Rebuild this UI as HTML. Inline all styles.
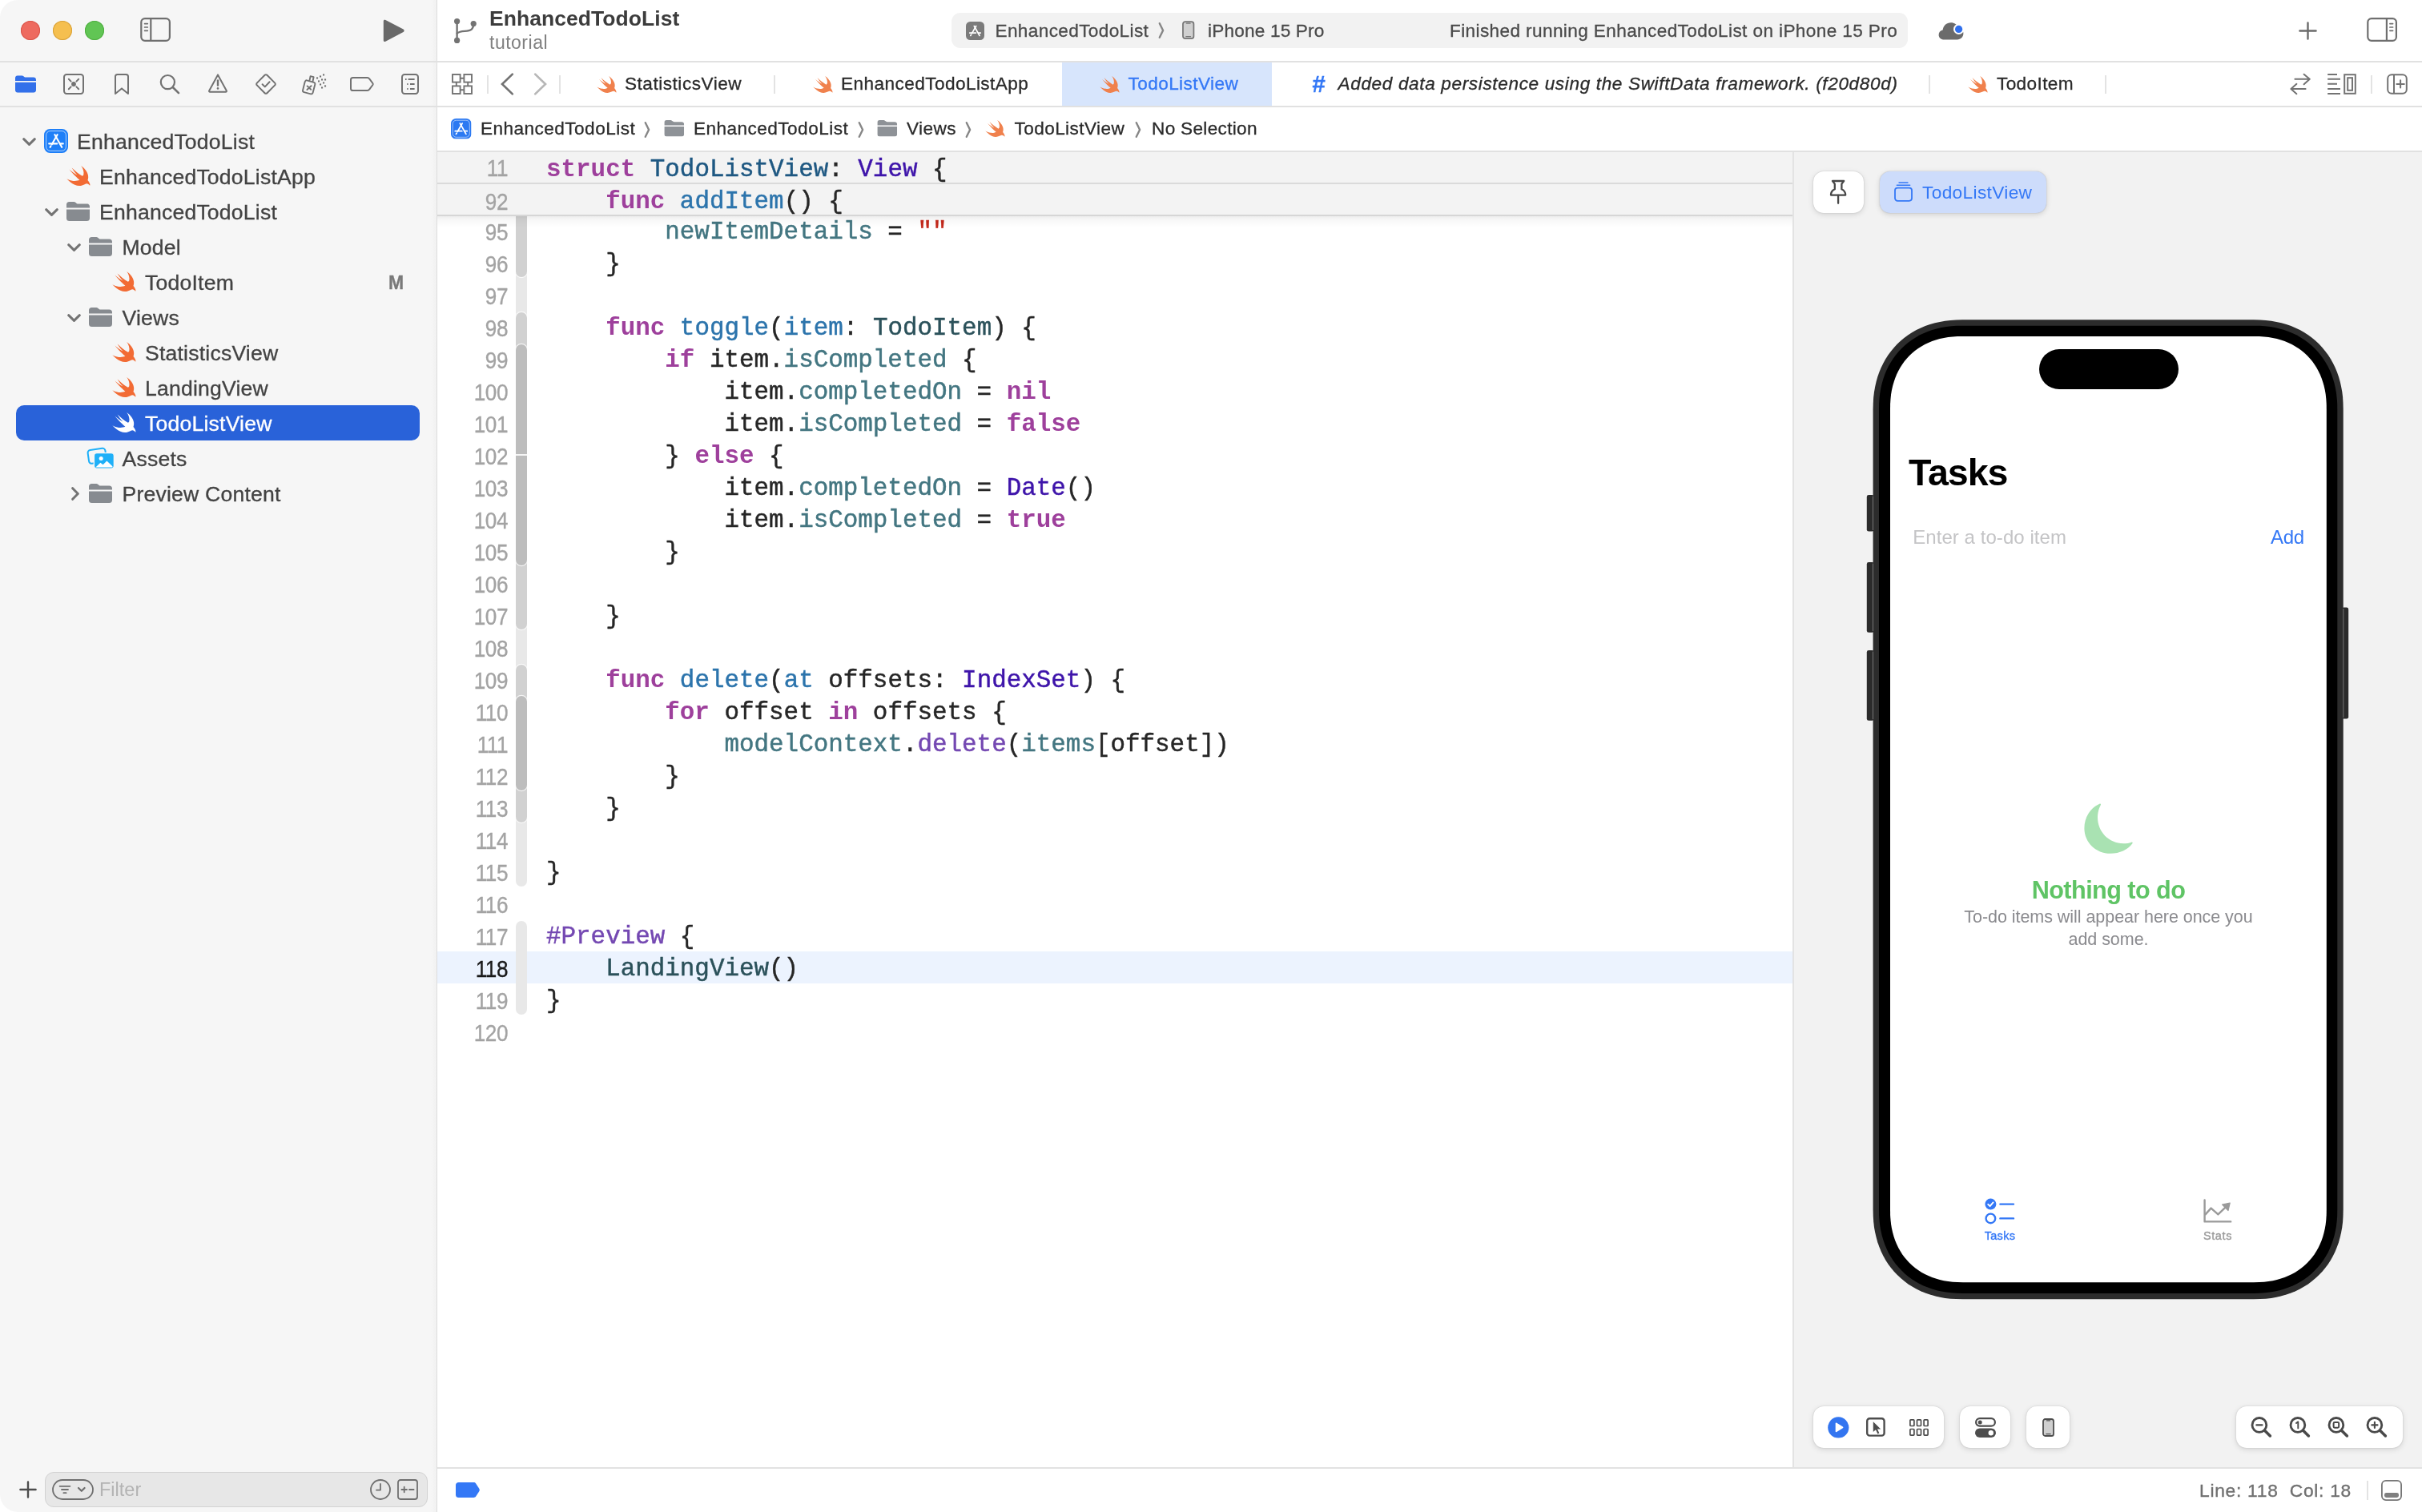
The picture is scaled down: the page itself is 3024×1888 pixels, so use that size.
<!DOCTYPE html>
<html lang="en">
<head>
<meta charset="utf-8">
<title>EnhancedTodoList — TodoListView.swift</title>
<style>
*{box-sizing:border-box;margin:0;padding:0}
html,body{width:3024px;height:1888px;background:#fff}
body{position:relative;font-family:"Liberation Sans",sans-serif;color:#262626;-webkit-font-smoothing:antialiased}
#app{position:absolute;left:0;top:0;width:3024px;height:1888px;overflow:hidden;background:#fff;will-change:transform}
.abs{position:absolute}
.t{position:absolute;white-space:pre;line-height:1}
svg{position:absolute;overflow:visible}
/* regions */
#sidebar{position:absolute;left:0;top:0;width:545px;height:1888px;background:linear-gradient(90deg,#f6f6f6 0,#f6f6f6 538px,#f1f1f1 545px);border-radius:22px 0 0 22px}
#sbline{position:absolute;left:545px;top:0;width:1px;height:1888px;background:#dddddd}
.hline{position:absolute;height:2px;background:#e1e1e1}
.vsep{position:absolute;width:2px;background:#e3e3e3}
/* sidebar tree */
.row{position:absolute;left:0;width:545px;height:44px}
.row .lbl{position:absolute;top:8.5px;font-size:26.6px;line-height:28px;color:#434343;white-space:pre;letter-spacing:.2px;-webkit-text-stroke-width:.3px}
.sel{position:absolute;left:20px;top:506px;width:504px;height:44px;border-radius:10px;background:#2962d9}
/* tabs / crumbs */
.tab{position:absolute;top:91.4px;font-size:22.6px;line-height:28px;color:#2b2b2b;white-space:pre;-webkit-text-stroke-width:.3px}
.crumb{position:absolute;top:147.2px;font-size:22.6px;line-height:28px;color:#2b2b2b;white-space:pre;-webkit-text-stroke-width:.3px}
.chev{position:absolute;top:151px;width:8px;height:22px}
/* editor */
#editor{position:absolute;left:546px;top:190px;width:1692px;height:1642px;background:#fff;overflow:hidden}
.ln{position:absolute;left:0;width:88px;text-align:right;font-size:29px;line-height:40px;height:40px;color:#a3a3a3;letter-spacing:-.5px;transform:scaleX(.9);transform-origin:100% 50%;-webkit-text-stroke-width:.35px}
.cl{position:absolute;left:136px;font-family:"Liberation Mono",monospace;font-size:30.9px;line-height:40px;height:40px;white-space:pre;color:#262626;-webkit-text-stroke-width:.45px}
.k{color:#9e409c;font-weight:bold;-webkit-text-stroke-width:0}
.ty{color:#1e5882}
.fn{color:#2c74ac}
.iv{color:#437681}
.pc{color:#2b515a}
.sc{color:#3e14aa}
.sf{color:#7448b2}
.st{color:#c4291c}
.rib{position:absolute;left:98px;width:14px}
/* preview */
#preview{position:absolute;left:2239px;top:190px;width:785px;height:1642px;background:#f2f2f2}
.card{position:absolute;background:#fff;border-radius:13px;box-shadow:0 0 1.5px rgba(0,0,0,.22),0 2px 7px rgba(0,0,0,.13)}
</style>
</head>
<body>
<div id="app">
<svg width="0" height="0" style="left:-10px;top:-10px">
<defs>
<symbol id="swift" viewBox="0 0 30 25.4">
<path d="M18.25 0.1C21.5 2.2 25.2 6.3 26.6 10.5C27.5 13.3 27.3 16 26.5 17.9C27.8 19.4 29.3 22 29.4 23.6C29.4 24.6 29.2 24.9 28.9 24.6C28.2 23.5 26.6 22.2 24.6 22.4C23.4 22.6 22.6 23.3 21.4 23.8C19.8 24.6 18 25.1 16.1 25.1C12.2 25.1 8.2 23.2 5.6 21C3.5 19.3 1.6 17.5 0.3 16.3C3 17.7 5.5 18.6 8.2 18.9C11.2 19.3 14.2 18.9 16.4 17.6C13.4 15.3 8.5 10.5 3.4 4.4C6.5 7 10.5 10 13.5 11.6C10.8 9 8.5 5.5 6.6 2.5C10.5 6.3 15.5 10.3 19.8 12.8C20.4 12.5 21 12 21.3 11.2C22 8 21 3.8 18.25 0.1Z"/>
</symbol>
<symbol id="folder" viewBox="0 0 29 24">
<path d="M0 3.6C0 1.4 1.3 0 3.5 0H8.6C9.9 0 10.6 .3 11.6 1.1L12.6 1.9C13.2 2.4 13.8 2.6 14.8 2.6H25.4C27.6 2.6 29 3.9 29 6.1V7.6H0ZM0 9.4H29V20.4C29 22.6 27.6 24 25.4 24H3.6C1.4 24 0 22.6 0 20.4Z"/>
</symbol>
<symbol id="chevd" viewBox="0 0 17 10">
<path d="M1.7 1.7L8.5 8.3L15.3 1.7" fill="none" stroke-width="3" stroke-linecap="round" stroke-linejoin="round"/>
</symbol>
<symbol id="chevr" viewBox="0 0 10 17">
<path d="M1.7 1.7L8.3 8.5L1.7 15.3" fill="none" stroke-width="3" stroke-linecap="round" stroke-linejoin="round"/>
</symbol>
<symbol id="appA" viewBox="0 0 30 30">
<rect x="0" y="0" width="30" height="30" rx="7.5"/>
<rect x="2.6" y="2.6" width="24.8" height="24.8" rx="5.2" fill="none" stroke="#fff" stroke-opacity=".65" stroke-width="1"/>
<g stroke="#fff" stroke-width="2.1" stroke-linecap="round" fill="none">
<path d="M6.2 18.4H16.2M20.6 18.4H23.8"/>
<path d="M16.6 7.2L9.6 19.4M8.4 21.4L7.6 22.8"/>
<path d="M13.4 7.2L22.2 22.8"/>
</g>
</symbol>
<symbol id="crumbsep" viewBox="0 0 8 22">
<path d="M1.8 2.2L6.1 11L1.8 19.8" fill="none" stroke="#868686" stroke-width="2.4" stroke-linecap="round" stroke-linejoin="round"/>
</symbol>
</defs>
</svg>
<!-- ================= SIDEBAR ================= -->
<div id="sidebar">
  <!-- traffic lights -->
  <div class="abs" style="left:26px;top:26px;width:24px;height:24px;border-radius:50%;background:#ee6a5f;box-shadow:inset 0 0 0 1px #d9554a"></div>
  <div class="abs" style="left:66px;top:26px;width:24px;height:24px;border-radius:50%;background:#f5bf4f;box-shadow:inset 0 0 0 1px #d8a13a"></div>
  <div class="abs" style="left:106px;top:26px;width:24px;height:24px;border-radius:50%;background:#61c554;box-shadow:inset 0 0 0 1px #4fae41"></div>
  <!-- sidebar toggle -->
  <svg style="left:175px;top:22px" width="39" height="30" viewBox="0 0 39 30"><rect x="1.3" y="1.2" width="35.6" height="27.6" rx="4.6" fill="none" stroke="#6f6f6f" stroke-width="2.2"/><path d="M13.3 1.5V28.5" stroke="#6f6f6f" stroke-width="2.2"/><path d="M5.6 7.6H9.3M5.6 12H9.3M5.6 16.3H9.3" stroke="#6f6f6f" stroke-width="1.7" stroke-linecap="round"/></svg>
  <!-- run -->
  <svg style="left:477px;top:23.5px" width="29" height="29" viewBox="0 0 29 29"><path d="M1.8 2.6C1.8 1 3.1 .4 4.4 1.1L26.6 12.6C28 13.4 28 15.3 26.6 16.1L4.4 27.7C3.1 28.4 1.8 27.8 1.8 26.2Z" fill="#696969"/></svg>

  <!-- navigator icons -->
  <svg style="left:19px;top:94px" width="26" height="22" viewBox="0 0 29 24" fill="#3370ea"><use href="#folder"/></svg>
  <svg style="left:79px;top:92px" width="26" height="26" viewBox="0 0 26 26" fill="none" stroke="#727272" stroke-width="2" stroke-linecap="round"><rect x="1" y="1" width="24" height="24" rx="3.2"/><path d="M6.8 6.8L9.6 9.6M19.2 6.8L16.4 9.6M6.8 19.2L9.6 16.4M19.2 19.2L16.4 16.4"/><circle cx="13" cy="13" r="2.9" fill="#727272" stroke="none"/></svg>
  <svg style="left:143px;top:92px" width="18" height="26" viewBox="0 0 18 26" fill="none" stroke="#727272" stroke-width="2" stroke-linejoin="round"><path d="M1 3.6C1 2 2 1 3.6 1H14.4C16 1 17 2 17 3.6V25L9 18.4L1 25Z"/></svg>
  <svg style="left:199px;top:92px" width="26" height="26" viewBox="0 0 26 26" fill="none" stroke="#727272" stroke-width="2.2" stroke-linecap="round"><circle cx="10.4" cy="10.6" r="8.6"/><path d="M16.8 17L24 24.2" stroke-width="2.6"/></svg>
  <svg style="left:260px;top:92px" width="24" height="24" viewBox="0 0 24 24" fill="none" stroke="#727272" stroke-width="2" stroke-linejoin="round" stroke-linecap="round"><path d="M12 1.4L22.8 21.2C23.2 22 22.8 22.7 21.9 22.7H2.1C1.2 22.7.8 22 1.2 21.2Z"/><path d="M12 8.4V14.6" stroke-width="2.4"/><circle cx="12" cy="18.4" r="1.3" fill="#727272" stroke="none"/></svg>
  <svg style="left:319px;top:92px" width="26" height="26" viewBox="0 0 26 26" fill="none" stroke="#727272" stroke-width="2" stroke-linejoin="round" stroke-linecap="round"><path d="M11.6 1.8C12.4 1 13.6 1 14.4 1.8L24.2 11.6C25 12.4 25 13.6 24.2 14.4L14.4 24.2C13.6 25 12.4 25 11.6 24.2L1.8 14.4C1 13.6 1 12.4 1.8 11.6Z"/><path d="M8.6 13.2L11.8 16.4L17.6 10.2"/></svg>
  <svg style="left:377px;top:91px" width="31" height="28" viewBox="0 0 31 28" fill="none" stroke="#727272" stroke-width="1.9" stroke-linejoin="round" stroke-linecap="round"><path d="M5.2 9.2L14.8 11.8C16 12.1 16.6 13.2 16.3 14.4L13.6 24.8C13.3 26 12.2 26.6 11 26.3L2.6 24.1C1.4 23.8.8 22.7 1.1 21.5L3.6 11.6C3.9 10.4 4.6 9.6 5.2 9.2Z"/><path d="M9.4 9.8L10.6 4.2L14.6 5.2L13.4 11"/><path d="M6.6 16.4L11.2 20.8M11.6 16.2L6.4 21"/><g fill="#727272" stroke="none"><rect x="18" y="5.4" width="2.1" height="2.1"/><rect x="22" y="3.4" width="2.1" height="2.1"/><rect x="26" y="1.4" width="2.1" height="2.1"/><rect x="20" y="9.4" width="2.1" height="2.1"/><rect x="24" y="7.4" width="2.1" height="2.1"/><rect x="28" y="7.4" width="2.1" height="2.1"/><rect x="22" y="13.4" width="2.1" height="2.1"/><rect x="26" y="11.4" width="2.1" height="2.1"/><rect x="24" y="17.4" width="2.1" height="2.1"/><rect x="28" y="15.4" width="2.1" height="2.1"/></g></svg>
  <svg style="left:437px;top:96px" width="30" height="18" viewBox="0 0 30 18" fill="none" stroke="#727272" stroke-width="2" stroke-linejoin="round"><path d="M3.6 1H21.6C22.8 1 23.6 1.4 24.2 2.4L28.4 8C28.9 8.7 28.9 9.3 28.4 10L24.2 15.6C23.6 16.6 22.8 17 21.6 17H3.6C2 17 1 16 1 14.4V3.6C1 2 2 1 3.6 1Z"/></svg>
  <svg style="left:501px;top:92px" width="22" height="26" viewBox="0 0 22 26" fill="none" stroke="#727272" stroke-width="2" stroke-linecap="round"><rect x="1" y="1" width="20" height="24" rx="3.2"/><path d="M8.6 7H16.6M11 13H16.6M11 19H16.6" stroke-linecap="butt"/><path d="M5 7H6.6M7.2 13H8.6M7.2 19H8.6" stroke-linecap="butt"/></svg>

  <!-- tree -->
  <div class="sel"></div>
  <div class="row" style="top:154px"><svg style="left:28px;top:17.5px" width="17" height="10" stroke="#737373"><use href="#chevd"/></svg><svg style="left:54.5px;top:7px" width="30" height="30" fill="#1e7ff8"><use href="#appA"/></svg><span class="lbl" style="left:96px">EnhancedTodoList</span></div>
  <div class="row" style="top:198px"><svg style="left:83px;top:9px" width="30" height="25.4" fill="#f26b34"><use href="#swift"/></svg><span class="lbl" style="left:124px">EnhancedTodoListApp</span></div>
  <div class="row" style="top:242px"><svg style="left:55.5px;top:17.5px" width="17" height="10" stroke="#737373"><use href="#chevd"/></svg><svg style="left:83px;top:10px" width="29" height="24" fill="#878b90"><use href="#folder"/></svg><span class="lbl" style="left:124px">EnhancedTodoList</span></div>
  <div class="row" style="top:286px"><svg style="left:84px;top:17.5px" width="17" height="10" stroke="#737373"><use href="#chevd"/></svg><svg style="left:111px;top:10px" width="29" height="24" fill="#878b90"><use href="#folder"/></svg><span class="lbl" style="left:152.5px">Model</span></div>
  <div class="row" style="top:330px"><svg style="left:139.5px;top:9px" width="30" height="25.4" fill="#f26b34"><use href="#swift"/></svg><span class="lbl" style="left:181px">TodoItem</span><span class="lbl" style="left:485px;top:9px;font-size:23px;font-weight:bold;color:#7a7a7a">M</span></div>
  <div class="row" style="top:374px"><svg style="left:84px;top:17.5px" width="17" height="10" stroke="#737373"><use href="#chevd"/></svg><svg style="left:111px;top:10px" width="29" height="24" fill="#878b90"><use href="#folder"/></svg><span class="lbl" style="left:152.5px">Views</span></div>
  <div class="row" style="top:418px"><svg style="left:139.5px;top:9px" width="30" height="25.4" fill="#f26b34"><use href="#swift"/></svg><span class="lbl" style="left:181px">StatisticsView</span></div>
  <div class="row" style="top:462px"><svg style="left:139.5px;top:9px" width="30" height="25.4" fill="#f26b34"><use href="#swift"/></svg><span class="lbl" style="left:181px">LandingView</span></div>
  <div class="row" style="top:506px"><svg style="left:139.5px;top:9px" width="30" height="25.4" fill="#ffffff"><use href="#swift"/></svg><span class="lbl" style="left:181px;color:#fff">TodoListView</span></div>
  <div class="row" style="top:550px"><svg style="left:109px;top:8px" width="34" height="28" viewBox="0 0 34 28"><rect x="1.2" y="2.8" width="22" height="17" rx="3.4" fill="#f6f6f6" stroke="#1fb0f8" stroke-width="2" transform="rotate(-8 12 11)"/><rect x="8.4" y="7.6" width="25" height="19.6" rx="3.6" fill="#1fb0f8" stroke="#f6f6f6" stroke-width="1.4"/><circle cx="17.2" cy="14.4" r="2.5" fill="#fff"/><path d="M10.4 25.4L16.4 19.8L19.6 22.2L24.4 17.4L31.4 24.2V25.4Z" fill="#fff"/></svg><span class="lbl" style="left:152.5px">Assets</span></div>
  <div class="row" style="top:594px"><svg style="left:89px;top:13.5px" width="10" height="17" stroke="#737373"><use href="#chevr"/></svg><svg style="left:111px;top:10px" width="29" height="24" fill="#878b90"><use href="#folder"/></svg><span class="lbl" style="left:152.5px">Preview Content</span></div>

  <!-- filter bar -->
  <svg style="left:24px;top:1849px" width="22" height="22" viewBox="0 0 22 22" stroke="#4d4d4d" stroke-width="2.4" stroke-linecap="round"><path d="M11 1.4V20.6M1.4 11H20.6"/></svg>
  <div class="abs" style="left:56px;top:1838px;width:478px;height:44px;border-radius:11px;background:#e7e7e7;border:1.5px solid #d2d2d2"></div>
  <svg style="left:65px;top:1847px" width="52" height="26" viewBox="0 0 52 26" fill="none" stroke="#6f6f6f" stroke-width="1.8" stroke-linecap="round" stroke-linejoin="round"><rect x="1" y="1" width="50" height="24" rx="12"/><path d="M9.6 8.8H22.4M12 13H20M14.4 17.2H17.6"/><path d="M33 11L36.8 14.8L40.6 11" stroke-width="2.2"/></svg>
  <span class="t" style="left:124px;top:1847px;font-size:23.5px;line-height:26px;color:#b3b3b3">Filter</span>
  <svg style="left:462px;top:1847px" width="26" height="26" viewBox="0 0 26 26" fill="none" stroke="#6f6f6f" stroke-width="1.8" stroke-linecap="round" stroke-linejoin="round"><circle cx="13" cy="13" r="12"/><path d="M13 6V13.6H8"/></svg>
  <svg style="left:496px;top:1847px" width="26" height="26" viewBox="0 0 26 26" fill="none" stroke="#6f6f6f" stroke-width="1.8" stroke-linecap="round"><rect x="1" y="1" width="24" height="24" rx="3"/><path d="M5.4 13H12M8.7 9.7V16.3M15 13H20.6"/></svg>
</div>
<div id="sbline"></div>
<!-- ================= TOOLBAR ================= -->
<div class="hline" style="left:0;top:76px;width:3024px"></div>
<div class="hline" style="left:0;top:132px;width:3024px"></div>
<div class="hline" style="left:546px;top:188px;width:2478px"></div>
<!-- branch icon -->
<svg style="left:566px;top:22px" width="30" height="33" viewBox="0 0 30 33" fill="none" stroke="#737373" stroke-width="2.4" stroke-linecap="round"><circle cx="4.6" cy="4.6" r="3.6" fill="#737373" stroke="none"/><circle cx="4.6" cy="28.4" r="3.6" fill="#737373" stroke="none"/><circle cx="25.2" cy="7.6" r="3.6" fill="#737373" stroke="none"/><path d="M4.6 4.6V28.4"/><path d="M4.6 19.6C10 15.2 18 18.4 22.8 14.6C24.6 13.2 25.2 11 25.2 7.6"/></svg>
<span class="t" style="left:611px;top:8px;font-size:26.5px;line-height:30px;font-weight:bold;color:#3c3c3c;letter-spacing:.05px">EnhancedTodoList</span>
<span class="t" style="left:611px;top:39.7px;font-size:23px;line-height:26px;color:#808080;letter-spacing:.5px">tutorial</span>
<!-- activity pill -->
<div class="abs" style="left:1188px;top:16px;width:1194px;height:44px;border-radius:11px;background:#f2f2f2"></div>
<svg style="left:1206px;top:27px" width="23" height="23" viewBox="0 0 30 30"><rect width="30" height="30" rx="7" fill="#7b7b7b"/><g stroke="#fff" stroke-width="2.2" stroke-linecap="round" fill="none"><path d="M6.2 18.4H16.2M20.6 18.4H23.8"/><path d="M16.6 7.2L9.6 19.4M8.4 21.4L7.6 22.8"/><path d="M13.4 7.2L22.2 22.8"/></g></svg>
<span class="t" style="left:1242.5px;top:25px;font-size:22.6px;line-height:28px;color:#4a4a4a;-webkit-text-stroke-width:.3px;letter-spacing:0.36px">EnhancedTodoList</span>
<svg style="left:1446px;top:27px" width="8" height="22"><use href="#crumbsep"/></svg>
<svg style="left:1475.5px;top:26.4px" width="15.4" height="23.2" viewBox="0 0 16 24"><rect x="1" y="1" width="14" height="22" rx="3" fill="#d0d0d0" stroke="#757575" stroke-width="1.8"/><path d="M5.6 3.2H10.4" stroke="#757575" stroke-width="1.4" stroke-linecap="round"/><path d="M5 20.4H11" stroke="#757575" stroke-width="1.2" stroke-linecap="round"/></svg>
<span class="t" style="left:1508px;top:25px;font-size:22.6px;line-height:28px;color:#4a4a4a;-webkit-text-stroke-width:.3px;letter-spacing:0.18px">iPhone 15 Pro</span>
<span class="t" style="left:1810px;top:25px;font-size:22.6px;line-height:28px;color:#4a4a4a;-webkit-text-stroke-width:.3px;letter-spacing:0.38px">Finished running EnhancedTodoList on iPhone 15 Pro</span>
<!-- cloud -->
<svg style="left:2420px;top:27px" width="33" height="23" viewBox="0 0 33 23"><path d="M7.4 22.4C3.2 22.4 .6 19.8 .6 16.4C.6 13.4 2.6 11 5.6 10.6C6.2 5 10.4 1.2 15.8 1.2C20.2 1.2 23.6 3.6 25 7.6C28.8 8 31.4 11 31.4 14.8C31.4 19.2 28.2 22.4 23.6 22.4Z" fill="#6b6b6b"/><circle cx="25.6" cy="9.4" r="6.6" fill="#fff"/><circle cx="25.6" cy="9.4" r="4.6" fill="#2f6fed"/></svg>
<!-- plus -->
<svg style="left:2870px;top:27px" width="23" height="23" viewBox="0 0 23 23" stroke="#6b6b6b" stroke-width="2.4" stroke-linecap="round"><path d="M11.5 1.4V21.6M1.4 11.5H21.6"/></svg>
<!-- inspector toggle -->
<svg style="left:2955px;top:22px" width="39" height="30" viewBox="0 0 39 30"><rect x="1.3" y="1.2" width="35.6" height="27.6" rx="4.6" fill="none" stroke="#6f6f6f" stroke-width="2.2"/><path d="M24.9 1.5V28.5" stroke="#6f6f6f" stroke-width="2.2"/><path d="M28.9 7.6H32.6M28.9 12H32.6M28.9 16.3H32.6" stroke="#6f6f6f" stroke-width="1.7" stroke-linecap="round"/></svg>

<!-- ================= TAB BAR ================= -->
<svg style="left:564px;top:92px" width="26" height="26" viewBox="0 0 26 26" fill="none" stroke="#737373" stroke-width="1.9"><rect x="1" y="1" width="9.6" height="9.6"/><rect x="15.4" y="1" width="9.6" height="9.6"/><rect x="1" y="15.4" width="9.6" height="9.6"/><rect x="15.4" y="15.4" width="9.6" height="9.6"/><path d="M10.6 5.8H15.4M10.6 20.2H15.4M5.8 10.6V15.4M20.2 10.6V15.4" /></svg>
<div class="vsep" style="left:608px;top:93.5px;height:23px"></div>
<svg style="left:625px;top:91px" width="17" height="28" viewBox="0 0 17 28" fill="none" stroke="#737373" stroke-width="2.7" stroke-linecap="round" stroke-linejoin="miter"><path d="M14.8 1.6L2 14L14.8 26.4"/></svg>
<svg style="left:665.5px;top:91px" width="17" height="28" viewBox="0 0 17 28" fill="none" stroke="#b7b7b7" stroke-width="2.7" stroke-linecap="round" stroke-linejoin="miter"><path d="M2.2 1.6L15 14L2.2 26.4"/></svg>
<div class="vsep" style="left:698px;top:93.5px;height:23px"></div>
<svg style="left:744.8px;top:94.6px" width="25" height="21.2" fill="#f0814d"><use href="#swift"/></svg>
<span class="tab" style="left:780px;letter-spacing:0.51px">StatisticsView</span>
<div class="vsep" style="left:966px;top:93.5px;height:23px"></div>
<svg style="left:1014.8px;top:94.6px" width="25" height="21.2" fill="#f0814d"><use href="#swift"/></svg>
<span class="tab" style="left:1050px;letter-spacing:0.43px">EnhancedTodoListApp</span>
<div class="abs" style="left:1326px;top:78px;width:262px;height:54px;background:#d7e5fc"></div>
<svg style="left:1373px;top:94.6px" width="25" height="21.2" fill="#f0814d"><use href="#swift"/></svg>
<span class="tab" style="left:1408.5px;color:#3478f6;letter-spacing:0.41px">TodoListView</span>
<span class="tab" style="left:1638px;top:91px;color:#3478f6;font-size:29.5px;font-style:italic;font-weight:bold">#</span>
<span class="tab" style="left:1670.5px;font-style:italic;letter-spacing:0.63px">Added data persistence using the SwiftData framework. (f20d80d)</span>
<div class="vsep" style="left:2408px;top:93.5px;height:23px"></div>
<svg style="left:2457px;top:94.6px" width="25" height="21.2" fill="#f0814d"><use href="#swift"/></svg>
<span class="tab" style="left:2493px;letter-spacing:0.38px">TodoItem</span>
<div class="vsep" style="left:2628px;top:93.5px;height:23px"></div>
<!-- right tab-bar icons -->
<svg style="left:2850px;top:86px" width="174" height="40" viewBox="2850 86 174 40" fill="none" stroke="#737373" stroke-width="2" stroke-linecap="round" stroke-linejoin="round">
<path d="M2865.4 98.8H2883.6M2876.6 92.7L2883.8 98.8L2876.6 105.3"/>
<path d="M2878.6 111H2860.6M2867.4 104.8L2860.4 111L2867.4 117.2"/>
<g stroke-linecap="butt"><path d="M2906.2 92.9H2918M2906.2 98.8H2922M2906.2 104.8H2918M2906.2 110.9H2922M2906.2 117H2922"/>
<rect x="2927.2" y="93.2" width="13.6" height="23.6" stroke-linejoin="miter"/><rect x="2931.2" y="97.2" width="5.8" height="15.6" stroke-linejoin="miter"/></g>
<rect x="2981.2" y="93.2" width="23.6" height="23.6" rx="5"/><path d="M2989 93.4V116.6" stroke-linecap="butt"/><path d="M2992.4 104.9H3001.8M2997.1 100.2V109.6"/>
</svg>
<div class="vsep" style="left:2960px;top:93.5px;height:23px"></div>

<!-- ================= JUMP BAR ================= -->
<svg style="left:563px;top:147.5px" width="25.5" height="25.5" fill="#2b79f2"><use href="#appA"/></svg>
<span class="crumb" style="left:600px;letter-spacing:0.45px">EnhancedTodoList</span>
<svg class="chev" style="left:804px"><use href="#crumbsep"/></svg>
<svg style="left:829px;top:150px" width="25.5" height="20.5" viewBox="0 0 29 24" fill="#8e9297"><use href="#folder"/></svg>
<span class="crumb" style="left:866px;letter-spacing:0.45px">EnhancedTodoList</span>
<svg class="chev" style="left:1070.5px"><use href="#crumbsep"/></svg>
<svg style="left:1095px;top:150px" width="25.5" height="20.5" viewBox="0 0 29 24" fill="#8e9297"><use href="#folder"/></svg>
<span class="crumb" style="left:1132px;letter-spacing:0.43px">Views</span>
<svg class="chev" style="left:1204.5px"><use href="#crumbsep"/></svg>
<svg style="left:1229.5px;top:150px" width="25" height="21.2" fill="#f0814d"><use href="#swift"/></svg>
<span class="crumb" style="left:1266.5px;letter-spacing:0.41px">TodoListView</span>
<svg class="chev" style="left:1416.5px"><use href="#crumbsep"/></svg>
<span class="crumb" style="left:1438px;letter-spacing:0.31px">No Selection</span>
<!-- ================= EDITOR ================= -->
<div id="editor">
<div class="abs" style="left:0;top:998px;width:1692px;height:40px;background:#ecf3fe"></div>
<div class="rib" style="top:78px;height:839px;background:#e8e8e8;border-radius:0px 0px 7px 7px"></div>
<div class="rib" style="top:78px;height:78px;background:#d1d1d1;border-radius:0px 0px 7px 7px;box-shadow:0 0 0 1.2px rgba(255,255,255,.75)"></div>
<div class="rib" style="top:200px;height:396px;background:#d1d1d1;border-radius:7px 7px 7px 7px;box-shadow:0 0 0 1.2px rgba(255,255,255,.75)"></div>
<div class="rib" style="top:240px;height:137px;background:#bdbdbd;border-radius:7px 7px 0px 0px;box-shadow:0 0 0 1.2px rgba(255,255,255,.75)"></div>
<div class="rib" style="top:379px;height:137px;background:#bdbdbd;border-radius:0px 0px 7px 7px;box-shadow:0 0 0 1.2px rgba(255,255,255,.75)"></div>
<div class="rib" style="top:640px;height:197px;background:#d1d1d1;border-radius:7px 7px 7px 7px;box-shadow:0 0 0 1.2px rgba(255,255,255,.75)"></div>
<div class="rib" style="top:679px;height:118px;background:#bdbdbd;border-radius:7px 7px 7px 7px;box-shadow:0 0 0 1.2px rgba(255,255,255,.75)"></div>
<div class="rib" style="top:960px;height:117px;background:#e8e8e8;border-radius:7px 7px 7px 7px"></div>
<div class="ln" style="top:79.5px">95</div><div class="cl" style="top:80.0px"><span class="iv">        newItemDetails</span> = <span class="st">""</span></div>
<div class="ln" style="top:119.5px">96</div><div class="cl" style="top:120.0px">    }</div>
<div class="ln" style="top:159.5px">97</div><div class="cl" style="top:160.0px"></div>
<div class="ln" style="top:199.5px">98</div><div class="cl" style="top:200.0px"><span class="k">    func</span> <span class="fn">toggle</span>(<span class="fn">item</span>: <span class="pc">TodoItem</span>) {</div>
<div class="ln" style="top:239.5px">99</div><div class="cl" style="top:240.0px"><span class="k">        if</span> item.<span class="iv">isCompleted</span> {</div>
<div class="ln" style="top:279.5px">100</div><div class="cl" style="top:280.0px">            item.<span class="iv">completedOn</span> = <span class="k">nil</span></div>
<div class="ln" style="top:319.5px">101</div><div class="cl" style="top:320.0px">            item.<span class="iv">isCompleted</span> = <span class="k">false</span></div>
<div class="ln" style="top:359.5px">102</div><div class="cl" style="top:360.0px">        } <span class="k">else</span> {</div>
<div class="ln" style="top:399.5px">103</div><div class="cl" style="top:400.0px">            item.<span class="iv">completedOn</span> = <span class="sc">Date</span>()</div>
<div class="ln" style="top:439.5px">104</div><div class="cl" style="top:440.0px">            item.<span class="iv">isCompleted</span> = <span class="k">true</span></div>
<div class="ln" style="top:479.5px">105</div><div class="cl" style="top:480.0px">        }</div>
<div class="ln" style="top:519.5px">106</div><div class="cl" style="top:520.0px"></div>
<div class="ln" style="top:559.5px">107</div><div class="cl" style="top:560.0px">    }</div>
<div class="ln" style="top:599.5px">108</div><div class="cl" style="top:600.0px"></div>
<div class="ln" style="top:639.5px">109</div><div class="cl" style="top:640.0px"><span class="k">    func</span> <span class="fn">delete</span>(<span class="fn">at</span> offsets: <span class="sc">IndexSet</span>) {</div>
<div class="ln" style="top:679.5px">110</div><div class="cl" style="top:680.0px"><span class="k">        for</span> offset <span class="k">in</span> offsets {</div>
<div class="ln" style="top:719.5px">111</div><div class="cl" style="top:720.0px"><span class="iv">            modelContext</span>.<span class="sf">delete</span>(<span class="iv">items</span>[offset])</div>
<div class="ln" style="top:759.5px">112</div><div class="cl" style="top:760.0px">        }</div>
<div class="ln" style="top:799.5px">113</div><div class="cl" style="top:800.0px">    }</div>
<div class="ln" style="top:839.5px">114</div><div class="cl" style="top:840.0px"></div>
<div class="ln" style="top:879.5px">115</div><div class="cl" style="top:880.0px">}</div>
<div class="ln" style="top:919.5px">116</div><div class="cl" style="top:920.0px"></div>
<div class="ln" style="top:959.5px">117</div><div class="cl" style="top:960.0px"><span class="sf">#Preview</span> {</div>
<div class="ln" style="top:999.5px;color:#1a1a1a">118</div><div class="cl" style="top:1000.0px"><span class="pc">    LandingView</span>()</div>
<div class="ln" style="top:1039.5px">119</div><div class="cl" style="top:1040.0px">}</div>
<div class="ln" style="top:1079.5px">120</div><div class="cl" style="top:1080.0px"></div>
<div class="abs" style="left:0;top:78px;width:1692px;height:16px;background:linear-gradient(rgba(0,0,0,.085),rgba(0,0,0,.03) 40%,rgba(0,0,0,0))"></div>
<div class="abs" style="left:0;top:0;width:1692px;height:78px;background:#f3f3f3"></div>
<div class="abs" style="left:0;top:38px;width:1692px;height:2px;background:#dadada"></div>
<div class="abs" style="left:0;top:78px;width:1692px;height:2px;background:#d6d6d6"></div>
<div class="ln" style="top:0.0px">11</div><div class="cl" style="top:1.5px"><span class="k">struct</span> <span class="ty">TodoListView</span>: <span class="sc">View</span> {</div>
<div class="ln" style="top:41.5px">92</div><div class="cl" style="top:41.5px"><span class="k">    func</span> <span class="fn">addItem</span>() {</div>
</div>
<!-- ================= PREVIEW CANVAS ================= -->
<div id="preview">
  <!-- pin + chip -->
  <div class="card" style="left:25px;top:24px;width:63px;height:52px"></div>
  <svg style="left:41px;top:30px" width="30" height="40" viewBox="2280 220 30 40" fill="none" stroke="#474747" stroke-width="2.3" stroke-linecap="round" stroke-linejoin="round"><path d="M2288 226H2302.2L2299.4 229.6V236.2C2302.4 237.6 2304.2 240.4 2304.2 243.6H2286C2286 240.4 2287.8 237.6 2290.8 236.2V229.6Z"/><path d="M2295.1 244V253.8"/></svg>
  <div class="card" style="left:108px;top:24px;width:208px;height:52px;background:#cddcfb;box-shadow:0 0 1.5px rgba(0,0,0,.24),0 2px 7px rgba(0,0,0,.14)"></div>
  <svg style="left:125.5px;top:36.5px" width="23" height="25" viewBox="0 0 23 25" fill="none" stroke="#3478f6" stroke-width="1.8" stroke-linecap="round"><path d="M6 1H17" stroke-width="1.3"/><path d="M3.4 4.2H19.6" stroke-width="1.6"/><rect x="1" y="7.6" width="21" height="16.2" rx="3.2"/></svg>
  <span class="t" style="left:161px;top:36px;font-size:22.7px;line-height:28px;color:#3478f6;letter-spacing:.34px">TodoListView</span>

  <!-- iPhone -->
  <svg style="left:81px;top:200px" width="630" height="1240" viewBox="2320 390 630 1240">
  <g fill="#2b2b2b"><rect x="2330.8" y="618" width="9" height="45.6" rx="2.4"/><rect x="2330.8" y="702" width="9" height="87.8" rx="2.4"/><rect x="2330.8" y="812" width="9" height="87.8" rx="2.4"/><rect x="2924" y="758.6" width="8.2" height="139" rx="2.4"/></g>
  
  <path d="M2338.6 511.3 2338.8 503.1 2339.2 496.0 2340.0 489.2 2341.2 482.7 2342.6 476.5 2344.3 470.4 2346.4 464.5 2348.7 458.9 2351.4 453.4 2354.3 448.2 2357.5 443.2 2361.1 438.4 2364.8 433.9 2368.9 429.6 2373.2 425.5 2377.7 421.8 2382.5 418.2 2387.5 415.0 2392.7 412.1 2398.2 409.4 2403.8 407.1 2409.7 405.0 2415.8 403.3 2422.0 401.9 2428.5 400.7 2435.3 399.9 2442.4 399.5 2450.6 399.3 2813.7 399.3 2821.9 399.5 2829.0 399.9 2835.8 400.7 2842.3 401.9 2848.5 403.3 2854.6 405.0 2860.5 407.1 2866.1 409.4 2871.6 412.1 2876.8 415.0 2881.8 418.2 2886.6 421.8 2891.1 425.5 2895.4 429.6 2899.5 433.9 2903.2 438.4 2906.8 443.2 2910.0 448.2 2912.9 453.4 2915.6 458.9 2917.9 464.5 2920.0 470.4 2921.7 476.5 2923.1 482.7 2924.3 489.2 2925.1 496.0 2925.5 503.1 2925.7 511.3 2925.7 1510.3 2925.5 1518.5 2925.1 1525.6 2924.3 1532.4 2923.1 1538.9 2921.7 1545.1 2920.0 1551.2 2917.9 1557.1 2915.6 1562.7 2912.9 1568.2 2910.0 1573.4 2906.8 1578.4 2903.2 1583.2 2899.5 1587.7 2895.4 1592.0 2891.1 1596.1 2886.6 1599.8 2881.8 1603.4 2876.8 1606.6 2871.6 1609.5 2866.1 1612.2 2860.5 1614.5 2854.6 1616.6 2848.5 1618.3 2842.3 1619.7 2835.8 1620.9 2829.0 1621.7 2821.9 1622.1 2813.7 1622.3 2450.6 1622.3 2442.4 1622.1 2435.3 1621.7 2428.5 1620.9 2422.0 1619.7 2415.8 1618.3 2409.7 1616.6 2403.8 1614.5 2398.2 1612.2 2392.7 1609.5 2387.5 1606.6 2382.5 1603.4 2377.7 1599.8 2373.2 1596.1 2368.9 1592.0 2364.8 1587.7 2361.1 1583.2 2357.5 1578.4 2354.3 1573.4 2351.4 1568.2 2348.7 1562.7 2346.4 1557.1 2344.3 1551.2 2342.6 1545.1 2341.2 1538.9 2340.0 1532.4 2339.2 1525.6 2338.8 1518.5 2338.6 1510.3Z" fill="#2c2c2c"/>
  <path d="M2346.0 511.3 2346.1 503.7 2346.6 497.0 2347.3 490.7 2348.4 484.6 2349.7 478.8 2351.4 473.1 2353.3 467.6 2355.5 462.3 2357.9 457.2 2360.7 452.4 2363.7 447.7 2367.0 443.2 2370.5 439.0 2374.3 435.0 2378.3 431.2 2382.5 427.7 2387.0 424.4 2391.7 421.4 2396.5 418.6 2401.6 416.2 2406.9 414.0 2412.4 412.1 2418.1 410.4 2423.9 409.1 2430.0 408.0 2436.3 407.3 2443.0 406.8 2450.6 406.7 2813.7 406.7 2821.3 406.8 2828.0 407.3 2834.3 408.0 2840.4 409.1 2846.2 410.4 2851.9 412.1 2857.4 414.0 2862.7 416.2 2867.8 418.6 2872.6 421.4 2877.3 424.4 2881.8 427.7 2886.0 431.2 2890.0 435.0 2893.8 439.0 2897.3 443.2 2900.6 447.7 2903.6 452.4 2906.4 457.2 2908.8 462.3 2911.0 467.6 2912.9 473.1 2914.6 478.8 2915.9 484.6 2917.0 490.7 2917.7 497.0 2918.2 503.7 2918.3 511.3 2918.3 1510.3 2918.2 1517.9 2917.7 1524.6 2917.0 1530.9 2915.9 1537.0 2914.6 1542.8 2912.9 1548.5 2911.0 1554.0 2908.8 1559.3 2906.4 1564.4 2903.6 1569.2 2900.6 1573.9 2897.3 1578.4 2893.8 1582.6 2890.0 1586.6 2886.0 1590.4 2881.8 1593.9 2877.3 1597.2 2872.6 1600.2 2867.8 1603.0 2862.7 1605.4 2857.4 1607.6 2851.9 1609.5 2846.2 1611.2 2840.4 1612.5 2834.3 1613.6 2828.0 1614.3 2821.3 1614.8 2813.7 1614.9 2450.6 1614.9 2443.0 1614.8 2436.3 1614.3 2430.0 1613.6 2423.9 1612.5 2418.1 1611.2 2412.4 1609.5 2406.9 1607.6 2401.6 1605.4 2396.5 1603.0 2391.7 1600.2 2387.0 1597.2 2382.5 1593.9 2378.3 1590.4 2374.3 1586.6 2370.5 1582.6 2367.0 1578.4 2363.7 1573.9 2360.7 1569.2 2357.9 1564.4 2355.5 1559.3 2353.3 1554.0 2351.4 1548.5 2349.7 1542.8 2348.4 1537.0 2347.3 1530.9 2346.6 1524.6 2346.1 1517.9 2346.0 1510.3Z" fill="#000"/>
  <path d="M2360.0 510.9 2360.1 503.9 2360.5 497.9 2361.1 492.3 2362.0 487.0 2363.2 481.8 2364.6 476.9 2366.2 472.2 2368.1 467.6 2370.2 463.2 2372.5 459.0 2375.1 454.9 2377.9 451.1 2380.9 447.5 2384.1 444.0 2387.6 440.8 2391.2 437.8 2395.0 435.0 2399.1 432.4 2403.3 430.1 2407.7 428.0 2412.3 426.1 2417.0 424.5 2421.9 423.1 2427.1 421.9 2432.4 421.0 2438.0 420.4 2444.0 420.0 2451.0 419.9 2813.8 419.9 2820.8 420.0 2826.8 420.4 2832.4 421.0 2837.7 421.9 2842.9 423.1 2847.8 424.5 2852.5 426.1 2857.1 428.0 2861.5 430.1 2865.7 432.4 2869.8 435.0 2873.6 437.8 2877.2 440.8 2880.7 444.0 2883.9 447.5 2886.9 451.1 2889.7 454.9 2892.3 459.0 2894.6 463.2 2896.7 467.6 2898.6 472.2 2900.2 476.9 2901.6 481.8 2902.8 487.0 2903.7 492.3 2904.3 497.9 2904.7 503.9 2904.8 510.9 2904.8 1510.2 2904.7 1517.2 2904.3 1523.2 2903.7 1528.8 2902.8 1534.1 2901.6 1539.3 2900.2 1544.2 2898.6 1548.9 2896.7 1553.5 2894.6 1557.9 2892.3 1562.1 2889.7 1566.2 2886.9 1570.0 2883.9 1573.6 2880.7 1577.1 2877.2 1580.3 2873.6 1583.3 2869.8 1586.1 2865.7 1588.7 2861.5 1591.0 2857.1 1593.1 2852.5 1595.0 2847.8 1596.6 2842.9 1598.0 2837.7 1599.2 2832.4 1600.1 2826.8 1600.7 2820.8 1601.1 2813.8 1601.2 2451.0 1601.2 2444.0 1601.1 2438.0 1600.7 2432.4 1600.1 2427.1 1599.2 2421.9 1598.0 2417.0 1596.6 2412.3 1595.0 2407.7 1593.1 2403.3 1591.0 2399.1 1588.7 2395.0 1586.1 2391.2 1583.3 2387.6 1580.3 2384.1 1577.1 2380.9 1573.6 2377.9 1570.0 2375.1 1566.2 2372.5 1562.1 2370.2 1557.9 2368.1 1553.5 2366.2 1548.9 2364.6 1544.2 2363.2 1539.3 2362.0 1534.1 2361.1 1528.8 2360.5 1523.2 2360.1 1517.2 2360.0 1510.2Z" fill="#fff"/>
  <path d="M2338.5 619.5V662M2338.5 703.5V788.2M2338.5 813.5V898.2M2925.8 760V896" stroke="#7d7d7d" stroke-width=".9" fill="none"/>
  </svg>
  <div id="screen" class="abs" style="left:121px;top:230px;width:545px;height:1181px">
    <div class="abs" style="left:185.5px;top:16px;width:174px;height:50px;border-radius:25px;background:#000"></div>
    <span class="t" style="left:23px;top:143.5px;font-size:46.6px;line-height:52px;font-weight:bold;color:#000;letter-spacing:-1.05px">Tasks</span>
    <span class="t" style="left:28.2px;top:237.3px;font-size:24px;line-height:28px;color:#c4c4c6;letter-spacing:.06px">Enter a to-do item</span>
    <span class="t" style="left:475px;top:237px;font-size:24px;line-height:28px;color:#3478f6;letter-spacing:-.3px">Add</span>
    <svg style="left:242px;top:583px" width="61" height="63" viewBox="0 0 61 63"><path d="M19.4 .7C20.6 .2 21.4 1 20.8 2.2C18.4 6.8 17 12 17 17.6C17 35.8 31 50.2 49.2 50.2C53 50.2 56.2 49.7 59.2 48.7C60.4 48.3 61.1 49.2 60.4 50.2C54.8 57.8 44.6 62.8 33 62.8C14.8 62.8 .4 48.8 .4 31.2C.4 17.4 8.2 5.6 19.4 .7Z" fill="#a9e2b2"/></svg>
    <span class="t" style="left:0;width:545px;text-align:center;top:673px;font-size:30.6px;line-height:36px;font-weight:bold;color:#5fc465;letter-spacing:-.55px">Nothing to do</span>
    <span class="t" style="left:0;width:545px;text-align:center;top:712px;font-size:21.5px;line-height:27.8px;color:#8a8a8e;letter-spacing:-.05px">To-do items will appear here once you
add some.</span>
    <!-- tab bar -->
    <svg style="left:117.8px;top:1075.5px" width="38" height="33" viewBox="0 0 38 33" fill="none" stroke="#3478f6" stroke-width="2.4" stroke-linecap="round"><circle cx="7.4" cy="7.6" r="7" fill="#3478f6" stroke="none"/><path d="M4.2 7.8L6.6 10.2L10.6 5.4" stroke="#fff" stroke-width="1.9" stroke-linejoin="round"/><circle cx="7.4" cy="25.4" r="5.8"/><path d="M19.4 7.6H36M19.4 25.4H36"/></svg>
    <span class="t" style="left:97px;width:80px;text-align:center;top:1114.3px;font-size:14.5px;line-height:18px;color:#3478f6;letter-spacing:.3px;-webkit-text-stroke:.35px #3478f6">Tasks</span>
    <svg style="left:391px;top:1076.5px" width="37" height="31" viewBox="0 0 37 31" fill="none" stroke="#9a9a9a" stroke-width="2.4" stroke-linecap="round" stroke-linejoin="round"><path d="M1.6 1.4V28.4H34.2"/><path d="M2.6 19.4L9.6 11.6L18.4 19.4L28.6 9.6"/><path d="M23.6 7.2L33.2 5L31 14.6Z" fill="#9a9a9a" stroke-width="1.2"/></svg>
    <span class="t" style="left:369px;width:80px;text-align:center;top:1114.3px;font-size:14.5px;line-height:18px;color:#9a9a9a;letter-spacing:.6px;-webkit-text-stroke:.35px #9a9a9a">Stats</span>
  </div>

  <!-- bottom controls -->
  <div class="card" style="left:25px;top:1566px;width:163px;height:52px"></div>
  <svg style="left:42.5px;top:1578.5px" width="27" height="27" viewBox="0 0 27 27"><circle cx="13.3" cy="13.4" r="13.1" fill="#3375f0"/><path d="M9.7 8.5C9.7 7.7 10.5 7.3 11.2 7.7L18.9 12.4C19.6 12.8 19.6 13.9 18.9 14.3L11.2 19.1C10.5 19.5 9.7 19.1 9.7 18.3Z" fill="#fff"/></svg>
  <svg style="left:91px;top:1580px" width="24" height="24" viewBox="0 0 24 24" fill="none" stroke="#4d4d4d" stroke-width="2.4"><rect x="1.2" y="1.2" width="21.4" height="21.4" rx="3.2"/><path d="M8.8 5.2V18L12 15.2L14.4 20.4L16.4 19.4L14 14.4H18.2Z" fill="#4d4d4d" stroke="none"/></svg>
  <svg style="left:144.5px;top:1581.5px" width="24" height="21" viewBox="0 0 24 21" fill="none" stroke="#4d4d4d" stroke-width="1.7"><rect x=".9" y=".9" width="5" height="7.6" rx=".8"/><rect x="9.5" y=".9" width="5" height="7.6" rx=".8"/><rect x="18.1" y=".9" width="5" height="7.6" rx=".8"/><rect x=".9" y="12.5" width="5" height="7.6" rx=".8"/><rect x="9.5" y="12.5" width="5" height="7.6" rx=".8"/><rect x="18.1" y="12.5" width="5" height="7.6" rx=".8"/></svg>
  <div class="card" style="left:208px;top:1566px;width:63px;height:52px"></div>
  <svg style="left:226.5px;top:1579.5px" width="26" height="25" viewBox="0 0 26 25"><rect x="1.1" y="1.1" width="23.8" height="9.6" rx="4.8" fill="none" stroke="#4d4d4d" stroke-width="2.2"/><circle cx="6.2" cy="5.9" r="2.5" fill="#4d4d4d"/><rect x="0" y="13.4" width="26" height="11.6" rx="5.8" fill="#4d4d4d"/><circle cx="19.8" cy="19.2" r="3.2" fill="#fff"/></svg>
  <div class="card" style="left:290.5px;top:1566px;width:54px;height:52px"></div>
  <svg style="left:310.5px;top:1580.5px" width="15" height="23" viewBox="0 0 15 23"><rect x="1" y="1" width="13" height="21" rx="2.6" fill="#cfcfcf" stroke="#4d4d4d" stroke-width="1.8"/><path d="M5.4 2.8H9.6" stroke="#4d4d4d" stroke-width="1.3" stroke-linecap="round"/><path d="M4.8 19.6H10.2" stroke="#4d4d4d" stroke-width="1.1" stroke-linecap="round"/></svg>
  <div class="card" style="left:553px;top:1566px;width:208px;height:52px"></div>
  <g></g>
  <svg style="left:571px;top:1579px" width="26" height="26" viewBox="0 0 26 26" fill="none" stroke="#494949" stroke-width="2.8" stroke-linecap="round"><circle cx="10.9" cy="10.4" r="8.9"/><path d="M17.6 17.2L24.4 24" stroke-width="3.5"/><path d="M7.3 10.4H14.5" stroke-width="2.1"/></svg>
  <svg style="left:619px;top:1579px" width="26" height="26" viewBox="0 0 26 26" fill="none" stroke="#494949" stroke-width="2.8" stroke-linecap="round"><circle cx="10.9" cy="10.4" r="8.9"/><path d="M17.6 17.2L24.4 24" stroke-width="3.5"/><path d="M9 8L11.3 6.4V14.4" stroke-width="1.9" stroke-linejoin="round"/></svg>
  <svg style="left:667px;top:1579px" width="26" height="26" viewBox="0 0 26 26" fill="none" stroke="#494949" stroke-width="2.8" stroke-linecap="round"><circle cx="10.9" cy="10.4" r="8.9"/><path d="M17.6 17.2L24.4 24" stroke-width="3.5"/><rect x="7.6" y="7.1" width="6.6" height="6.6" rx="1.4" stroke-width="2"/></svg>
  <svg style="left:715px;top:1579px" width="26" height="26" viewBox="0 0 26 26" fill="none" stroke="#494949" stroke-width="2.8" stroke-linecap="round"><circle cx="10.9" cy="10.4" r="8.9"/><path d="M17.6 17.2L24.4 24" stroke-width="3.5"/><path d="M7.3 10.4H14.5M10.9 6.8V14" stroke-width="2.1"/></svg>
</div>

<div class="abs" style="left:2238px;top:190px;width:2px;height:1642px;background:#e3e3e3"></div>
<!-- ================= STATUS BAR ================= -->
<div class="abs" style="left:546px;top:1832px;width:2478px;height:2px;background:#e2e2e2"></div>
<svg style="left:569px;top:1851px" width="30" height="19" viewBox="0 0 30 19"><path d="M3.6 0H22.4C23.6 0 24.4 .4 25.2 1.4L29.4 8C29.9 8.9 29.9 10.1 29.4 11L25.2 17.6C24.4 18.6 23.6 19 22.4 19H3.6C1.4 19 0 17.6 0 15.4V3.6C0 1.4 1.4 0 3.6 0Z" fill="#3478f6"/></svg>
<span class="t" style="left:2746px;top:1847.3px;font-size:22.8px;line-height:28px;color:#707070;letter-spacing:.72px;-webkit-text-stroke-width:.35px">Line: 118  Col: 18</span>
<div class="vsep" style="left:2954.5px;top:1849px;height:24px"></div>
<svg style="left:2973px;top:1848px" width="26" height="26" viewBox="0 0 26 26"><rect x=".9" y=".9" width="24.2" height="24.2" rx="5" fill="none" stroke="#757575" stroke-width="1.8"/><rect x="4" y="16" width="18" height="6" rx="2.4" fill="#808080"/></svg>
</div>
</body>
</html>
